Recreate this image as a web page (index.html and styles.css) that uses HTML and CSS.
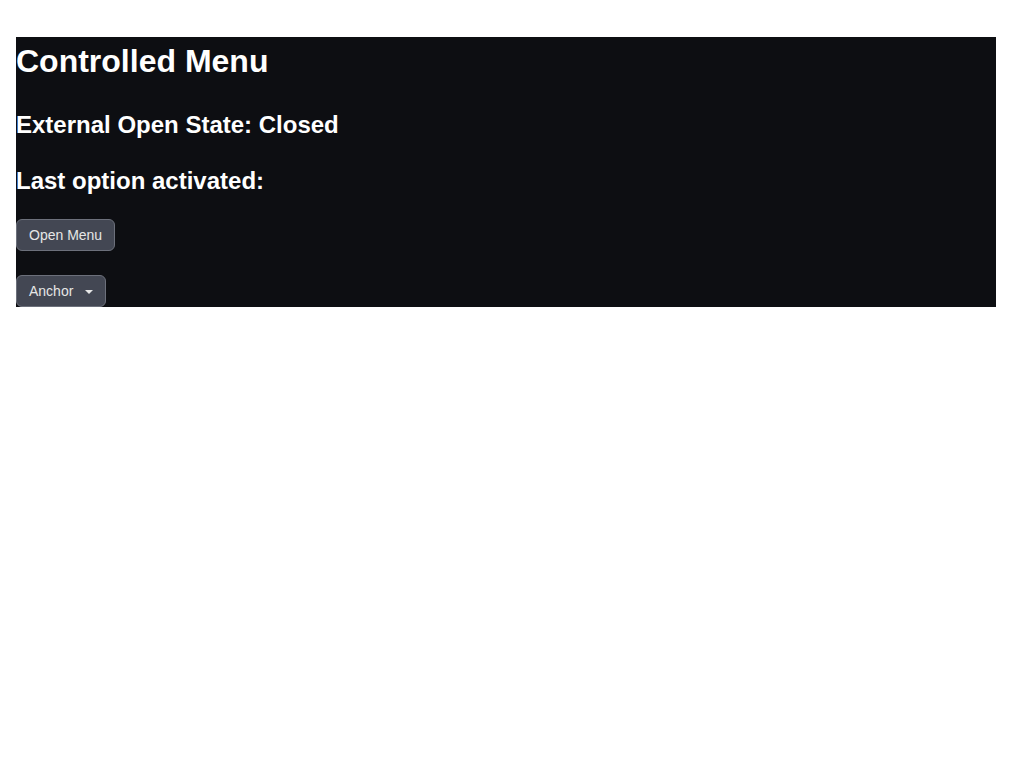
FILE: index.html
```html
<!DOCTYPE html>
<html>
<head>
<meta charset="utf-8">
<link rel="stylesheet" href="styles.css">
</head>
<body>
<div class="panel">
  <h1 class="title">Controlled Menu</h1>
  <h2 class="sub">External Open State: Closed</h2>
  <h2 class="sub">Last option activated: </h2>
  <div class="row"><button class="btn">Open Menu</button></div>
  <div class="row last"><button class="btn">Anchor<span class="caret"><svg width="8" height="4" viewBox="0 0 8 4"><path d="M0 0h8L4 4z" fill="#e6e6e6"/></svg></span></button></div>
</div>
</body>
</html>
```
FILE: styles.css
```css
html, body {
  margin: 0;
  padding: 0;
  background: #ffffff;
}
body {
  padding: 16px;
  font-family: "Liberation Sans", Arial, sans-serif;
  line-height: 1.5;
}
.panel {
  background: #0d0e12;
  color: #ffffff;
  display: flow-root;
  margin-top: 21px;
}
.title {
  font-size: 32px;
  font-weight: bold;
  margin: 0 0 22px 0;
  line-height: 48px;
}
.sub {
  font-size: 24px;
  font-weight: bold;
  margin: 0 0 20px 0;
  line-height: 36px;
}
.row {
  display: flex;
  margin-bottom: 24px;
}
.row.last {
  margin-bottom: 0;
}
.btn {
  font-family: "Liberation Sans", Arial, sans-serif;
  font-size: 14px;
  color: #e6e6e6;
  background: #434753;
  border: 1px solid #6c707b;
  border-radius: 6px;
  height: 32px;
  padding: 0 12px;
  display: inline-flex;
  align-items: center;
  cursor: pointer;
}
.caret {
  display: inline-flex;
  margin-left: 12px;
  margin-top: 2px;
}
```
